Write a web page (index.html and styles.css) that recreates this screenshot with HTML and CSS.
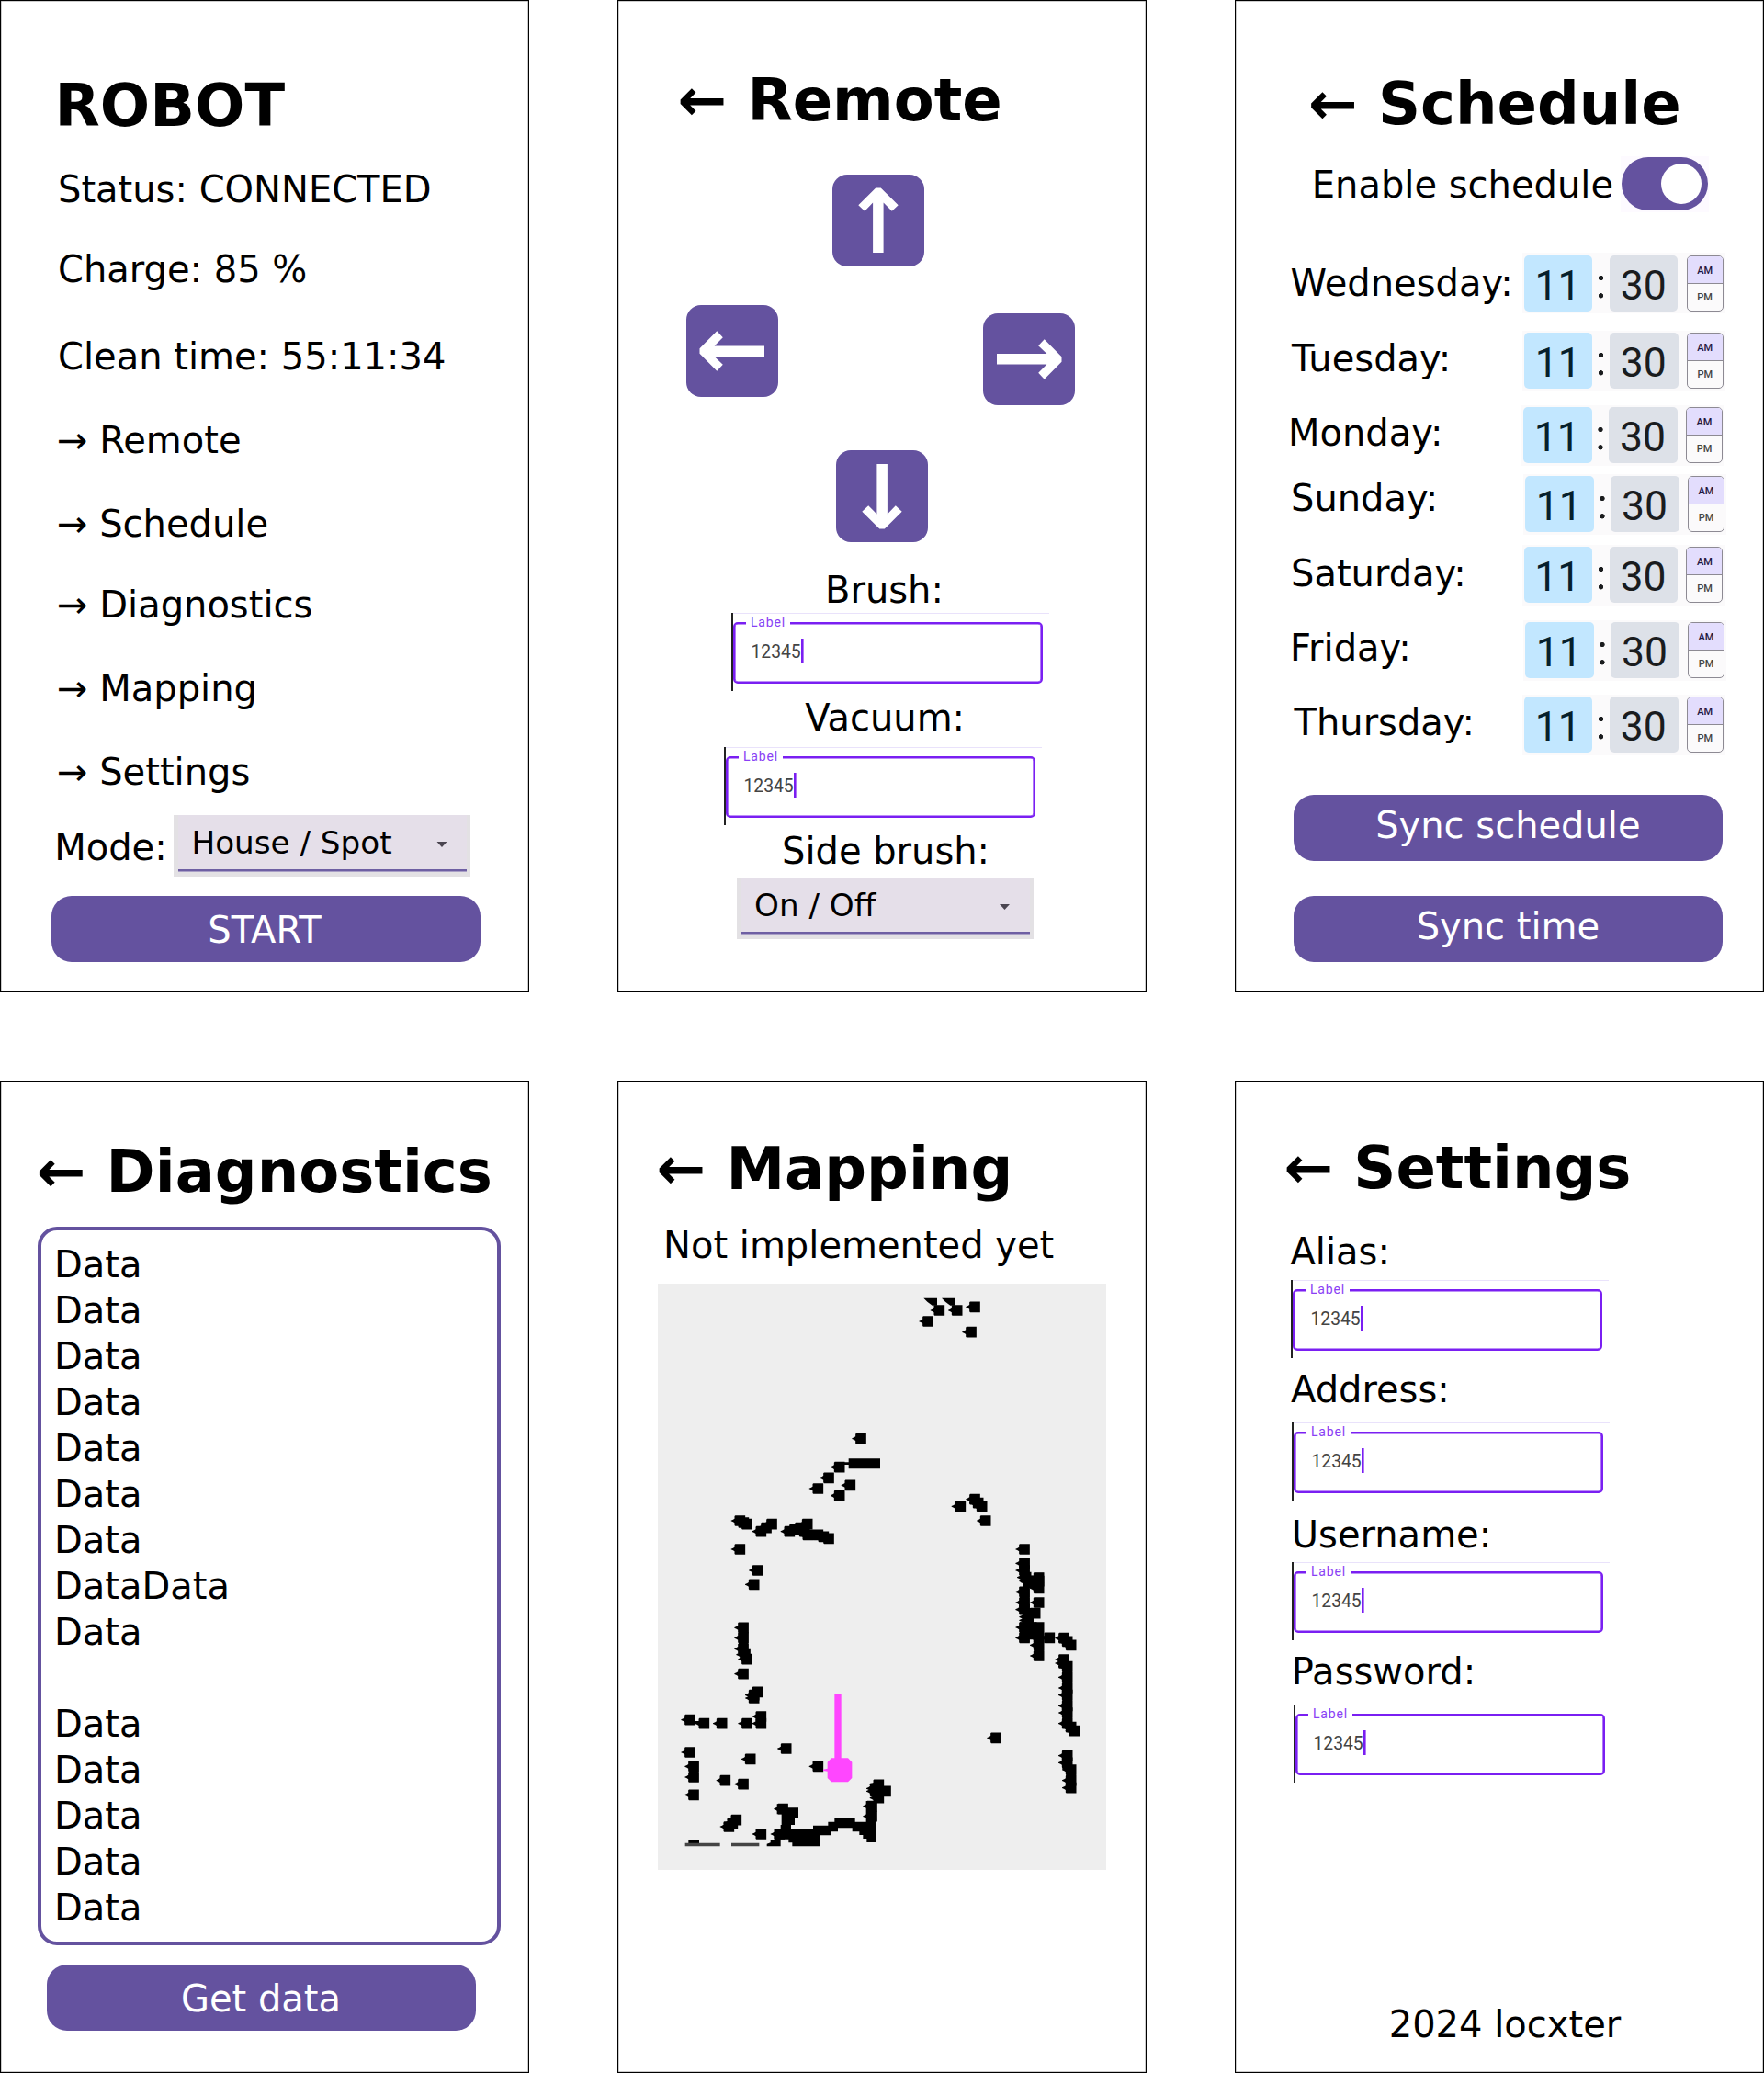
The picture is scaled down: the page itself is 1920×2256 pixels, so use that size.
FILE: index.html
```html
<!DOCTYPE html>
<html lang="en">
<head>
<meta charset="utf-8">
<title>Robot app screens</title>
<link rel="stylesheet" href="styles.css">
</head>
<body>
<svg class="defs" width="0" height="0" aria-hidden="true">
  <symbol id="arrow" viewBox="0 0 100 100">
    <path fill="#fff" d="M14.5 47.3 33.3 28.3 39.8 35.2 30.6 44.4H85V55.9H30.6L39.8 64.8 33.3 71.7 14.5 52.8Z"/>
  </symbol>
</svg>
<main class="board">
  <section class="screen home">
    <h1>ROBOT</h1>
    <p class="info">Status: CONNECTED</p>
    <p class="info">Charge: 85 %</p>
    <p class="info">Clean time: 55:11:34</p>
    <a class="link">→ Remote</a>
    <a class="link">→ Schedule</a>
    <a class="link">→ Diagnostics</a>
    <a class="link">→ Mapping</a>
    <a class="link">→ Settings</a>
    <div class="mode">
      <span class="mode-label">Mode:</span>
      <div class="select"><span>House / Spot</span><i class="caret"></i></div>
    </div>
    <button class="btn low">START</button>
  </section>

  <section class="screen remote">
    <h1>← Remote</h1>
    <div class="dpad">
      <button class="key up"><svg><use href="#arrow"/></svg></button>
      <div class="sides">
        <button class="key"><svg><use href="#arrow"/></svg></button>
        <button class="key right"><svg><use href="#arrow"/></svg></button>
      </div>
      <button class="key down"><svg><use href="#arrow"/></svg></button>
    </div>
    <p class="brush">Brush:</p>
    <div class="field f-brush"><div class="outline"><span class="tag">Label</span><span class="value">12345</span></div></div>
    <p class="vacuum">Vacuum:</p>
    <div class="field f-vacuum"><div class="outline"><span class="tag">Label</span><span class="value">12345</span></div></div>
    <p class="side">Side brush:</p>
    <div class="select"><span>On / Off</span><i class="caret"></i></div>
  </section>

  <section class="screen schedule">
    <h1>← Schedule</h1>
    <div class="enable"><span>Enable schedule</span><div class="switch"><div class="track"><i></i></div></div></div>
    <div class="day wed"><span>Wednesday:</span><div class="time"><b class="hour">11</b><i class="colon"></i><b class="min">30</b><div class="ampm"><span>AM</span><span>PM</span></div></div></div>
    <div class="day tue"><span>Tuesday:</span><div class="time"><b class="hour">11</b><i class="colon"></i><b class="min">30</b><div class="ampm"><span>AM</span><span>PM</span></div></div></div>
    <div class="day mon"><span>Monday:</span><div class="time"><b class="hour">11</b><i class="colon"></i><b class="min">30</b><div class="ampm"><span>AM</span><span>PM</span></div></div></div>
    <div class="day sun"><span>Sunday:</span><div class="time"><b class="hour">11</b><i class="colon"></i><b class="min">30</b><div class="ampm"><span>AM</span><span>PM</span></div></div></div>
    <div class="day sat"><span>Saturday:</span><div class="time"><b class="hour">11</b><i class="colon"></i><b class="min">30</b><div class="ampm"><span>AM</span><span>PM</span></div></div></div>
    <div class="day fri"><span>Friday:</span><div class="time"><b class="hour">11</b><i class="colon"></i><b class="min">30</b><div class="ampm"><span>AM</span><span>PM</span></div></div></div>
    <div class="day thu"><span>Thursday:</span><div class="time"><b class="hour">11</b><i class="colon"></i><b class="min">30</b><div class="ampm"><span>AM</span><span>PM</span></div></div></div>
    <button class="btn">Sync schedule</button>
    <button class="btn">Sync time</button>
  </section>

  <section class="screen diagnostics">
    <h1>← Diagnostics</h1>
    <pre class="log">Data
Data
Data
Data
Data
Data
Data
DataData
Data

Data
Data
Data
Data
Data</pre>
    <button class="btn low">Get data</button>
  </section>

  <section class="screen mapping">
    <h1>← Mapping</h1>
    <p>Not implemented yet</p>
    <svg class="map" viewBox="48 51 1464 1914">
      <marker id="hit" markerUnits="userSpaceOnUse" markerWidth="60" markerHeight="60" refX="30" refY="30">
        <path d="M12.5 23 8 26 1 29V31L8 34 12.5 37V45L15 47.5H47.500V12.500H15L12.500 15Z"/>
      </marker>
      <!-- laser hits -->
      <polyline class="hits" points="930,174 967,138 1025,138 1083,127 1071,209 711,557 641,650 606,685 571,720 676,709 641,743 1036,778 1083,755 1094,767 1106,778 1118,825 316,825 328,831 339,836 385,860 402,848 420,836 478,860 495,854 513,848 536,836 527,860 538,871 571,871 589,877 606,883 316,918 374,987 362,1033"/>
      <polyline class="hits" points="1245,918 1245,964 1245,987 1250,1010 1257,1022 1275,1022 1292,1011 1292,1022 1292,1045 1245,1057 1245,1092 1292,1092 1245,1115 1280,1127 1257,1139 1257,1150 1245,1173 1268,1173 1292,1173 1245,1207 1268,1195 1292,1207 1292,1231 1292,1266 1327,1207 1374,1208 1385,1219 1397,1231 1374,1278 1374,1290 1385,1301 1385,1336 1385,1371 1385,1394 1385,1429 1385,1452 1385,1487 1397,1499 1408,1511 1385,1592 1385,1615 1397,1638 1397,1673 1397,1697 1152,1534"/>
      <polyline class="hits" points="327,1174 327,1207 327,1243 333,1262 339,1277 327,1325 374,1384 362,1394 362,1404 385,1464 385,1487 339,1487 153,1475 199,1487 257,1487 467,1569 350,1603 571,1627 153,1581 165,1627 165,1662 268,1673 327,1685 165,1720 304,1802 292,1813 280,1824 385,1848 769,1687 758,1699 792,1708 758,1708 769,1730 747,1757 747,1790 456,1766 445,1848"/>
      <path d="M916 98h44v24H944L928 110ZM975 98h44v24H1003L987 110ZM655 634h16v-12h103v33H671V642H655ZM165 1479h30v8h-30Z"/>
      <!-- continuous walls -->
      <path d="M1230 948h32v60h-32ZM1242 1004h50v40h-50ZM1276 995h32v65h-32ZM1230 1045h32v80h-32ZM1242 1110h32v50h-32ZM1230 1156h32v66h-32ZM1260 1158h48v54h-48ZM1276 1200h32v82h-32ZM1369 1286h32v214h-32ZM1369 1577h32v60h-32ZM1381 1625h32v87h-32ZM312 1158h31v98h-31ZM150 1612h31v65h-31ZM370 1449h31v53h-31Z"/>
      <path d="M437 1750H472V1762H507V1795H495V1818H483V1830H555V1820H604V1808H625V1796H692V1808H728V1740H762V1875H730V1863H718V1851H706V1840H683V1828H636V1840H612V1852H577V1888H487V1876H475V1865H449V1888H404V1880L416 1876V1866H428V1850H437V1830H449V1818H452V1783H437Z"/>
      <path d="M148 1866h35v12h-35Z"/>
      <path fill="#444" d="M137 1877h114v11H137ZM288 1877h91v11H288Z"/>
      <!-- robot and heading -->
      <path fill="#ff46ff" d="M625 1390h22v210h22l13 13v52l-13 13h-54l-13-13v-22l-14-2v-4l14-3v-21l13-13h10Z"/>
    </svg>
  </section>

  <section class="screen settings">
    <h1>← Settings</h1>
    <p class="alias">Alias:</p>
    <div class="field f-alias"><div class="outline"><span class="tag">Label</span><span class="value">12345</span></div></div>
    <p class="address">Address:</p>
    <div class="field f-mid"><div class="outline"><span class="tag">Label</span><span class="value">12345</span></div></div>
    <p class="username">Username:</p>
    <div class="field f-mid"><div class="outline"><span class="tag">Label</span><span class="value">12345</span></div></div>
    <p class="username">Password:</p>
    <div class="field f-password"><div class="outline"><span class="tag">Label</span><span class="value">12345</span></div></div>
    <footer>2024 locxter</footer>
  </section>
</main>
</body>
</html>
```
FILE: styles.css
```css
* { box-sizing: border-box; }

body {
  margin: 0;
  width: 1920px;
  background: #fff;
  color: #000;
  font: 40px/50px "DejaVu Sans", sans-serif;
  white-space: nowrap;
}

h1, p, pre { margin: 0; }

h1 { font-size: 64px; line-height: 80px; font-weight: 700; }

.defs { display: block; }

.board {
  display: grid;
  grid-template-columns: repeat(3, 576px);
  grid-template-rows: repeat(2, 1080px);
  gap: 96px;
}

.screen {
  display: grid;
  align-items: start;
  align-content: start;
  justify-items: start;
  box-shadow: inset 0 0 0 1px #000, inset 0 0 0 1.5px #999;
}

/* buttons */
.btn {
  width: 467px;
  height: 72px;
  padding: 8px 1px 0 0;
  border: 0;
  border-radius: 22px;
  background: #64529f;
  color: #fff;
  font: inherit;
  line-height: 50px;
  display: flex;
  justify-content: center;
  align-items: flex-start;
}
.btn.low { padding-top: 12px; }

/* dropdown */
.select {
  width: 323px;
  height: 66.500px;
  padding: 8px 22px 0 14px;
  border: solid #e3e1e4;
  border-width: 0 4px 5px 5px;
  background: linear-gradient(#6e5fa3, #6e5fa3) bottom / 100% 2.500px no-repeat padding-box, #e5dfe9;
  display: flex;
  justify-content: space-between;
  font-size: 34.200px;
  line-height: 44px;
}
.caret {
  width: 11px;
  height: 6px;
  margin-top: 21px;
  background: #4a4550;
  clip-path: polygon(0 0, 100% 0, 50% 100%);
}

/* outlined text field */
.field {
  width: 346px;
  height: 85px;
  padding: 9.500px 7px 8px 0;
  border-left: 2px solid #222;
  background: linear-gradient(#e9e2fb, #e9e2fb) top / 100% 1px no-repeat;
}
.outline {
  height: 67.500px;
  border: 2px solid #7a1ff2;
  border-radius: 5px;
  box-shadow: inset 0 0 0 .6px #7a1ff2;
  display: flex;
  flex-direction: column;
  align-items: flex-start;
  font-family: Roboto, sans-serif;
}
.tag {
  height: 16px;
  margin: -9.500px 0 0 12px;
  padding: 0 5px;
  background: #fff;
  color: #8a3ff5;
  font-size: 14px;
  line-height: 16px;
  letter-spacing: .8px;
}
.value {
  height: 27px;
  margin: 10px 0 0 17.500px;
  padding-right: .500px;
  border-right: 2px solid #7a1ff2;
  box-shadow: .6px 0 #7a1ff2;
  color: #444;
  font-size: 19.300px;
  line-height: 29px;
}

/* home */
.home { padding-top: 75px; grid-template-rows: 106px 87px 95px 91px 91px 88px 91px 91px 72px 88px 72px; }
.home h1 { margin-left: 59.500px; }
.info { margin-left: 63px; }
.link { margin-left: 62px; }
.mode { display: flex; margin-left: 59.200px; }
.mode-label { width: 130.300px; padding-top: 10px; }
.home .btn { margin-left: 56px; padding-right: 3px; }

/* remote */
.remote { padding-top: 69px; grid-template-rows: 121px 427px 50px 89px 57px 88px 54px 67px; }
.remote h1 { margin-left: 65.500px; }
.dpad { display: flex; flex-direction: column; width: 423.200px; margin-left: 74.800px; }
.key { width: 100px; height: 100px; padding: 0; border: 0; border-radius: 16px; background: #64529f; }
.key svg { display: block; width: 100px; height: 100px; }
.sides { display: flex; justify-content: space-between; margin: 41.600px 0 49.400px; }
.up { margin-left: 159.500px; }
.up svg { transform: rotate(90deg); }
.right { margin-top: 9px; }
.right svg { transform: rotate(180deg); }
.down { margin-left: 163px; }
.down svg { transform: rotate(-90deg); }
.brush { margin-left: 226px; }
.vacuum { margin-left: 204.200px; }
.side { margin-left: 179px; }
.f-brush { margin-left: 124px; }
.f-vacuum { margin-left: 116px; }
.remote .select { margin-left: 130px; }

/* schedule */
.schedule { padding-top: 73px; grid-template-rows: 97px 105px 84.600px 81.400px 74.700px 77.300px 81.800px 81.200px 109px 110px 72px; }
.schedule h1 { margin-left: 80px; }
.enable { display: flex; margin-left: 83.800px; }
.enable > span { width: 336.200px; padding-top: 6px; }
.switch { width: 96px; height: 61px; padding: 1px; background: #fdfaff; }
.track { width: 94px; height: 58px; padding: 7px; border-radius: 29px; background: #64529f; display: flex; justify-content: flex-end; }
.track i { width: 44px; height: 44px; border-radius: 50%; background: #fff; }

.day { display: flex; }
.day > span { padding-top: 5px; }
.wed > span { width: 252.400px; padding-top: 8px; }
.wed { margin-left: 60.500px; }
.tue { margin-left: 62px; }
.tue > span { width: 251px; }
.mon { margin-left: 58px; }
.mon > span { width: 254.200px; }
.sun { margin-left: 61px; }
.sun > span { width: 253.200px; padding-top: 1px; }
.sat { margin-left: 61px; }
.sat > span { width: 251.700px; padding-top: 6px; }
.fri { margin-left: 60px; }
.fri > span { width: 254.200px; }
.thu { margin-left: 64.500px; }
.thu > span { width: 248.500px; }

.time {
  width: 221px;
  height: 66px;
  padding: 2.500px 2px;
  background: #fbfafb;
  display: flex;
  font-family: Roboto, sans-serif;
}
.hour, .min {
  width: 74.400px;
  height: 61px;
  border-radius: 5px;
  background: #c2e7ff;
  color: #06202c;
  font-size: 44.500px;
  font-weight: 400;
  line-height: 66px;
  text-align: center;
}
.min { background: #dde1e8; color: #1a1c1e; padding-right: 1px; }
.hour { padding-right: 1px; }
.colon {
  width: 18.800px;
  background:
    radial-gradient(circle at 50% 24.500px, #1a1c1e 2.300px, transparent 3px),
    radial-gradient(circle at 50% 43.800px, #1a1c1e 2.300px, transparent 3px);
}
.ampm {
  width: 40px;
  height: 61px;
  margin-left: 9.200px;
  border: 1px solid #8d8a93;
  border-radius: 5px;
  overflow: hidden;
  display: flex;
  flex-direction: column;
  color: #444;
  font-size: 11px;
  font-weight: 500;
  line-height: 30px;
  text-align: center;
}
.ampm span { height: 29px; line-height: 29px; }
.ampm span:first-child { height: 30px; line-height: 31px; background: #e3ddfd; border-bottom: 1px solid #8d8a93; color: #1f1640; }
.schedule .btn { margin-left: 64.400px; }

/* diagnostics */
.diagnostics { padding-top: 59px; grid-template-rows: 100px 803.300px 72px; }
.diagnostics h1 { margin-left: 39.700px; }
.log {
  width: 504px;
  height: 782px;
  margin-left: 41px;
  padding: 12px 0 0 14px;
  border: 4px solid #64529f;
  border-radius: 21px;
  font: inherit;
}
.diagnostics .btn { margin-left: 51px; }

/* mapping */
.mapping { padding-top: 56px; grid-template-rows: 98px 67px 638px; }
.mapping h1 { margin-left: 42.500px; }
.mapping p { margin-left: 50px; }
.map { display: block; width: 488px; height: 638px; margin-left: 44px; background: #eee; }
.hits { fill: none; stroke: none; marker: url(#hit); }

/* settings */
.settings { padding-top: 55px; grid-template-rows: 106px 56px 94px 61px 97px 55px 94px 61.300px 322.700px 50px; }
.settings h1 { margin-left: 53.400px; }
.alias { margin-left: 60.500px; }
.address { margin-left: 61px; }
.username { margin-left: 61.800px; }
.f-alias { margin-left: 61px; }
.f-mid { margin-left: 62px; }
.f-password { margin-left: 64px; }
footer { margin-left: 167.700px; }
```
